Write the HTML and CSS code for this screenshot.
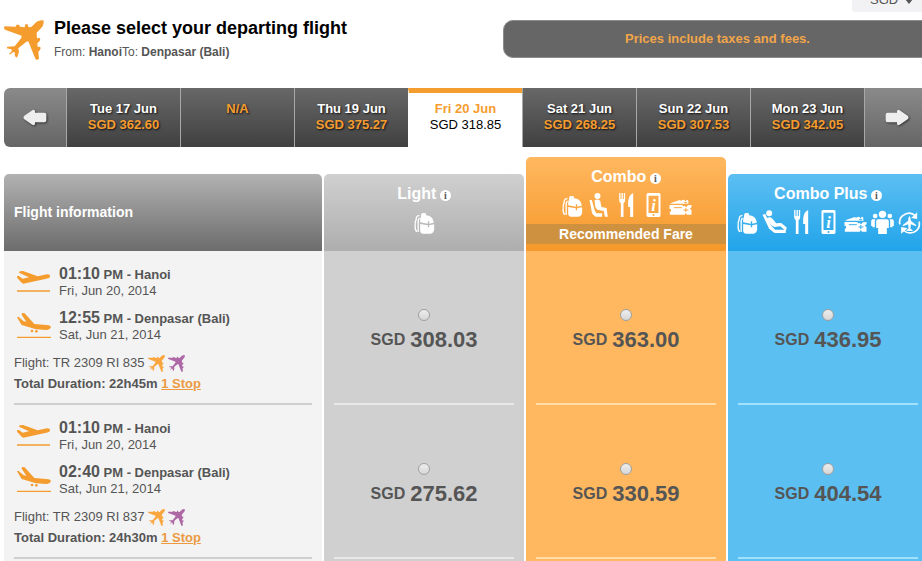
FILE: index.html
```html
<!DOCTYPE html>
<html lang="en">
<head>
<meta charset="utf-8">
<title>Select your departing flight</title>
<link rel="stylesheet" href="styles.css">
</head>
<body>
<svg class="sprite" aria-hidden="true">
  <symbol id="plane" viewBox="0 0 120 120"><path d="M2 19 36 20 37 14 45 14 48 20 62 22 64 13 71 13 73 21 81 22 98 5Q108 -1 118 1 121 9 115 20L98 38 99 55 106 53 109 57 107 63 100 70 101 81 108 80 110 84 108 90 103 95 105 117 97 120 93 114 73 64 67 65 43 85 45 96 39 113 33 109 32 97 28 96 17 104 16 101 24 92 22 88 8 85 10 80 32 79 52 54 53 47 3 29Q-2 23 2 19Z"/></symbol>
  <symbol id="takeoff" viewBox="0 0 102 66"><path d="M8 4 18 3 62 19 90 13Q100 13 99 20 98 25 88 26L19 41 14 38 0 23 1 18 6 18 17 26 36 22 6 8ZM0 61H99V65H0Z"/></symbol>
  <symbol id="landing" viewBox="0 0 102 78"><path d="M15 3 23 4 52 36 88 39Q100 39 102 46 100 53 90 54L57 52 14 39 0 16 4 14 20 28 28 29 14 8ZM0 74H102V78H0Z"/><circle cx="45" cy="57" r="4"/><circle cx="58" cy="58" r="4"/></symbol>
  <symbol id="bag" viewBox="0 0 60 72"><path d="M20 19Q18 8 28 9 36 8 35 16 52 17 56 31L58 38 44 41V34H40V41L17 37Q16 25 20 19Z"/><path d="M17 42 40 46V52H44V46L59 43V58Q58 70 48 71H26Q17 70 17 62Z"/><path d="M15 17Q5 16 5 28 1 36 2 48 1 60 7 65" fill="none" stroke="currentColor" stroke-width="4"/><path d="M15 24Q10 28 11 40V66" fill="none" stroke="currentColor" stroke-width="4"/></symbol>
  <symbol id="seat" viewBox="0 0 60 72"><circle cx="24" cy="9" r="9"/><path d="M15 22Q24 17 32 23L36 42 51 45 55 71H46L43 54 24 50Q18 48 17 40ZM0 21H7L16 53 21 61H38V71H18L8 62Z"/></symbol>
  <symbol id="recline" viewBox="0 0 72 72"><circle cx="20" cy="10" r="9"/><path d="M14 25Q21 18 30 26L41 40 56 39 72 52V59H66L53 49 36 51Q29 49 24 43ZM0 14 8 12 25 46 38 59H70V69H36L20 56Z"/></symbol>
  <symbol id="meal" viewBox="0 0 48 72"><path d="M2 0H6V18H9V0H13V18H16V0H20V20Q20 28 15 31V72H7V31Q2 28 2 20ZM35 72V42H29V25Q31 5 44 0V72Z"/></symbol>
  <symbol id="tablet" viewBox="0 0 48 72"><path fill-rule="evenodd" d="M7 0H41Q45 0 45 5V67Q45 72 41 72H7Q3 72 3 67V5Q3 0 7 0ZM9 8V60H39V8ZM24 63A3 3 0 1 0 24 69A3 3 0 1 0 24 63Z"/><text x="24" y="53" text-anchor="middle" class="glyph">i</text></symbol>
  <symbol id="voucher" viewBox="0 0 68 72"><path d="M3 31 32 21Q35 26 40 21L46 20 48 26 53 20 57 22 58 32H7ZM1 36H40Q41 42 45 38L51 43 56 37 67 36V43L62 47 67 51V65H53L50 59 47 65H2V56L6 55 5 48 1 47Z"/><path d="M14 44H38M43 51H58M50 45V57M45 29H54" fill="none" stroke="var(--cut)" stroke-width="3"/></symbol>
  <symbol id="group" viewBox="0 0 68 72"><circle cx="34" cy="13" r="11"/><circle cx="12" cy="18" r="7"/><circle cx="56" cy="18" r="7"/><path d="M21 28H47Q53 28 53 34V54H47V72H21V54H15V34Q15 28 21 28ZM3 28H13Q10 32 11 38V52H4V48H0V32ZM65 28H55Q58 32 57 38V52H64V48H68V32Z"/></symbol>
  <symbol id="rebook" viewBox="0 0 66 72"><path d="M4 43Q0 23 17 14 36 3 51 18M62 35Q66 57 47 66 29 74 14 60" fill="none" stroke="currentColor" stroke-width="5"/><path d="M56 7V27L38 24ZM8 71V51L27 55ZM33 18Q37 21 37 32L53 45V49L37 43 36 56 42 60V63H24V60L30 56 29 43 13 49V45L29 32Q29 21 33 18Z"/></symbol>
  <symbol id="arrow" viewBox="0 0 72 50"><path d="M2 25Q0 23 4 20L28 3Q36 0 36 7V11H64Q70 11 70 17V33Q70 39 64 39H36V43Q36 50 28 47L4 30Q0 27 2 25Z"/></symbol>
</svg>

<div class="page">
  <div class="currency">
    <select class="currency-select" aria-label="Currency"><option>SGD</option><option>USD</option></select>
    <svg class="currency-caret" viewBox="0 0 8 5" aria-hidden="true"><path d="M0 0H8L4 5Z"/></svg>
  </div>

  <header class="intro">
    <svg class="intro-icon" aria-hidden="true"><use href="#plane"/></svg>
    <div class="intro-text">
      <h1>Please select your departing flight</h1>
      <p>From: <b>Hanoi</b>To: <b>Denpasar (Bali)</b></p>
    </div>
    <p class="notice">Prices include taxes and fees.</p>
  </header>

  <nav class="dates" aria-label="Departure date">
    <button class="step" type="button" aria-label="Earlier dates"><svg aria-hidden="true"><use href="#arrow"/></svg></button>
    <button class="day" type="button"><span>Tue 17 Jun</span><span class="fare">SGD 362.60</span></button>
    <button class="day" type="button"><span class="fare">N/A</span></button>
    <button class="day" type="button"><span>Thu 19 Jun</span><span class="fare">SGD 375.27</span></button>
    <button class="day current" type="button"><span>Fri 20 Jun</span><span class="fare">SGD 318.85</span></button>
    <button class="day" type="button"><span>Sat 21 Jun</span><span class="fare">SGD 268.25</span></button>
    <button class="day" type="button"><span>Sun 22 Jun</span><span class="fare">SGD 307.53</span></button>
    <button class="day" type="button"><span>Mon 23 Jun</span><span class="fare">SGD 342.05</span></button>
    <button class="step next" type="button" aria-label="Later dates"><svg aria-hidden="true"><use href="#arrow"/></svg></button>
  </nav>

  <table class="flights">
    <thead>
      <tr>
        <th class="info-col" scope="col"><div class="head head-info">Flight information</div></th>
        <th scope="col"><div class="head head-light">
          <div class="name">Light <button class="tip" type="button">i</button></div>
          <div class="perks"><svg><use href="#bag"/></svg></div>
        </div></th>
        <th scope="col"><div class="head head-combo">
          <div class="name">Combo <button class="tip" type="button">i</button></div>
          <div class="perks"><svg><use href="#bag"/></svg><svg><use href="#seat"/></svg><svg><use href="#meal"/></svg><svg><use href="#tablet"/></svg><svg><use href="#voucher"/></svg></div>
          <div class="ribbon">Recommended Fare</div>
        </div></th>
        <th scope="col"><div class="head head-plus">
          <div class="name">Combo Plus <button class="tip" type="button">i</button></div>
          <div class="perks"><svg><use href="#bag"/></svg><svg><use href="#recline"/></svg><svg><use href="#meal"/></svg><svg><use href="#tablet"/></svg><svg><use href="#voucher"/></svg><svg><use href="#group"/></svg><svg><use href="#rebook"/></svg></div>
        </div></th>
      </tr>
    </thead>
    <tbody>
      <tr>
        <td class="info"><div class="cell">
          <div class="leg"><svg><use href="#takeoff"/></svg><div><b><span class="time">01:10</span> PM - Hanoi</b><br>Fri, Jun 20, 2014</div></div>
          <div class="leg"><svg><use href="#landing"/></svg><div><b><span class="time">12:55</span> PM - Denpasar (Bali)</b><br>Sat, Jun 21, 2014</div></div>
          <div class="number">Flight: TR 2309 RI 835 <svg><use href="#plane"/></svg><svg class="partner"><use href="#plane"/></svg></div>
          <div class="total">Total Duration: 22h45m <a href="#stops">1 Stop</a></div>
        </div></td>
        <td class="light"><div class="cell"><label class="price"><input type="radio" name="fare"><span class="amount"><span>SGD</span><strong>308.03</strong></span></label></div></td>
        <td class="combo"><div class="cell"><label class="price"><input type="radio" name="fare"><span class="amount"><span>SGD</span><strong>363.00</strong></span></label></div></td>
        <td class="plus"><div class="cell"><label class="price"><input type="radio" name="fare"><span class="amount"><span>SGD</span><strong>436.95</strong></span></label></div></td>
      </tr>
      <tr>
        <td class="info"><div class="cell">
          <div class="leg"><svg><use href="#takeoff"/></svg><div><b><span class="time">01:10</span> PM - Hanoi</b><br>Fri, Jun 20, 2014</div></div>
          <div class="leg"><svg><use href="#landing"/></svg><div><b><span class="time">02:40</span> PM - Denpasar (Bali)</b><br>Sat, Jun 21, 2014</div></div>
          <div class="number">Flight: TR 2309 RI 837 <svg><use href="#plane"/></svg><svg class="partner"><use href="#plane"/></svg></div>
          <div class="total">Total Duration: 24h30m <a href="#stops">1 Stop</a></div>
        </div></td>
        <td class="light"><div class="cell"><label class="price"><input type="radio" name="fare"><span class="amount"><span>SGD</span><strong>275.62</strong></span></label></div></td>
        <td class="combo"><div class="cell"><label class="price"><input type="radio" name="fare"><span class="amount"><span>SGD</span><strong>330.59</strong></span></label></div></td>
        <td class="plus"><div class="cell"><label class="price"><input type="radio" name="fare"><span class="amount"><span>SGD</span><strong>404.54</strong></span></label></div></td>
      </tr>
    </tbody>
    <tfoot>
      <tr><td class="info"></td><td class="light"></td><td class="combo"></td><td class="plus"></td></tr>
    </tfoot>
  </table>
</div>
</body>
</html>
```

FILE: styles.css
```css
* { box-sizing: border-box; }

html { overflow: hidden; }

body {
  margin: 0;
  background: #fff;
  color: #555;
  font: 13px/16px "Liberation Sans", Arial, sans-serif;
}

h1, p { margin: 0; }
button { border: 0; padding: 0; font: inherit; }
svg { fill: currentColor; }
.sprite { display: none; }

.page { margin: 0 -6px 0 4px; }

/* Currency picker */
.currency {
  position: relative;
  width: 76px;
  height: 24px;
  margin: -12px 0 0 auto;
}
.currency-select {
  appearance: none;
  width: 100%;
  height: 100%;
  padding: 0 18px;
  border: 0;
  border-radius: 3px;
  background: #f2f2f4;
  color: #555;
  font: inherit;
}
.currency-caret {
  position: absolute;
  right: 15px;
  top: 11px;
  width: 8px;
  height: 5px;
}

/* Page heading */
.intro {
  display: flex;
  align-items: flex-start;
  padding-top: 8px;
}
.intro-icon {
  width: 40px;
  height: 40px;
  margin-right: 10px;
  color: #f59c2f;
}
.intro-text { flex: 1; }
.intro h1 {
  color: #000;
  font-size: 18px;
  line-height: 16px;
}
.intro-text p { margin-top: 8px; font-size: 12px; }
.notice {
  width: 46%;
  padding: 10px 10px 10px 14px;
  border: 1px solid #8c8c8c;
  border-radius: 10px 0 0 10px;
  background: #666;
  color: #f0a54a;
  font-weight: bold;
  text-align: center;
}

/* Date strip */
.dates {
  display: flex;
  height: 59px;
  margin-top: 28px;
  border-radius: 6px 0 0 6px;
  overflow: hidden;
}
.step {
  width: 62px;
  background: linear-gradient(#8a8a8a, #656565);
  color: #eee;
}
.step svg {
  display: block;
  width: 24px;
  height: 17px;
  margin: 0 auto;
  filter: drop-shadow(1px 1px 1px #333);
}
.next { width: 64px; border-left: 1px solid #a8a8a8; }
.next svg { transform: scaleX(-1); filter: drop-shadow(-1px 1px 1px #333); }
.day {
  display: flex;
  flex: 1;
  flex-direction: column;
  align-items: center;
  padding-top: 13px;
  border-left: 1px solid #a8a8a8;
  background: linear-gradient(#686868, #404040);
  color: #fff;
  font-weight: bold;
  text-shadow: 1px 1px 2px #111;
}
.fare { color: #f59c2f; }
.current {
  padding-top: 8px;
  border-top: 5px solid #f59c2f;
  border-left-color: #fff;
  background: #fff;
  color: #f59c2f;
  text-shadow: none;
}
.current .fare { color: #000; font-weight: normal; }

/* Fare table */
.flights {
  width: calc(100% + 4px);
  margin: 10px -2px 0;
  border-spacing: 2px 0;
  table-layout: fixed;
}
.flights th, .flights td { padding: 0; }
.flights th { vertical-align: bottom; }
.info-col { width: 318px; }

.head {
  height: 77px;
  padding-top: 12px;
  border-radius: 5px 5px 0 0;
  color: #fff;
}
.head-info {
  padding: 30px 10px 0;
  background: linear-gradient(#b2b2b2, #6c6c6c);
  font-size: 14px;
  text-align: left;
}
.head-light { --cut: #bbb; background: linear-gradient(#d0d0d0, #aeaeae); }
.head-combo { --cut: #f8a947; height: 94px; background: linear-gradient(#ffb860, #f6982a); }
.head-plus { --cut: #3db0ed; background: linear-gradient(#5cbff2, #22a4ea); }

.name { font-size: 16px; line-height: 16px; }
.tip {
  width: 11px;
  height: 11px;
  margin-left: -1px;
  border-radius: 50%;
  background: #fff;
  color: #555;
  font: bold 10px/11px "Liberation Serif", serif;
  vertical-align: 0;
}
.perks {
  display: flex;
  justify-content: center;
  margin-top: 8px;
  color: #fff;
}
.perks svg { width: 27px; height: 24px; }
.glyph { font: italic bold 50px "Liberation Serif", serif; }
.ribbon {
  margin-top: 7px;
  background: #ce913f;
  font-size: 14px;
  line-height: 20px;
}

.info { background: #f3f3f3; --line: #cfcfcf; }
.light { background: #d0d0d0; --line: #e8e8e8; }
.combo { background: #ffb860; --line: #ffdca8; }
.plus { background: #5cbff2; --line: #a0e2fb; }

.cell {
  height: 154px;
  margin: 0 10px;
  border-bottom: 2px solid var(--line);
}
.info .cell { padding-top: 15px; }
.flights tfoot td { height: 20px; }

.leg {
  display: flex;
  gap: 8px;
  height: 44px;
  padding-left: 3px;
}
.leg svg {
  width: 34px;
  height: 26px;
  margin-top: 2px;
  color: #f59c2f;
}
.time { font-size: 16px; }
.number { display: flex; align-items: center; gap: 3px; height: 18px; }
.number svg { width: 17px; height: 17px; color: #f9a63f; }
.number .partner { color: #ad68a5; }
.total { margin-top: 4px; font-weight: bold; }
.total a { color: #ec9a42; }

.price {
  display: flex;
  flex-direction: column;
  align-items: center;
  gap: 8px;
  padding-top: 58px;
}
.price input {
  appearance: none;
  width: 12px;
  height: 12px;
  margin: 0;
  border: 1px solid #a0a0a0;
  border-radius: 50%;
  background: linear-gradient(#eee, #d6d6d6);
}
.amount {
  display: flex;
  align-items: center;
  gap: 5px;
  font-size: 16px;
  font-weight: bold;
  line-height: 22px;
}
.amount strong { font-size: 22px; }
```
